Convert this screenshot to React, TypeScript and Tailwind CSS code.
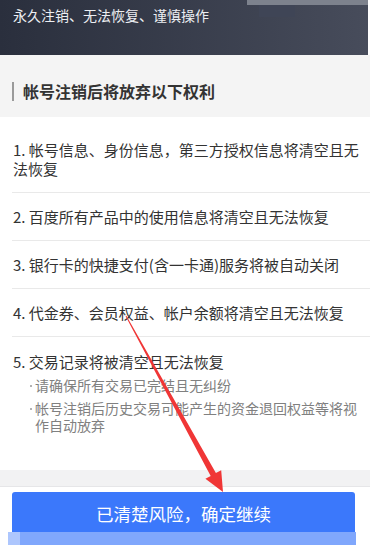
import React from 'react'

const items = [
  '1. 帐号信息、身份信息，第三方授权信息将清空且无法恢复',
  '2. 百度所有产品中的使用信息将清空且无法恢复',
  '3. 银行卡的快捷支付(含一卡通)服务将被自动关闭',
  '4. 代金券、会员权益、帐户余额将清空且无法恢复',
]

const subItems = ['请确保所有交易已完结且无纠纷', '帐号注销后历史交易可能产生的资金退回权益等将视作自动放弃']

export default function App() {
  return (
    <div
      className="relative w-[370px] h-[558px] overflow-hidden bg-white text-[#333]"
      style={{ fontFamily: '"Noto Sans CJK SC", "Noto Sans", sans-serif' }}
    >
      {/* header */}
      <div className="relative h-[55px] w-[368px] bg-gradient-to-r from-[#2a2f3d] to-[#474c5b]">
        <div className="absolute right-0 top-0 h-[5px] w-[121px] bg-[#7d828d]" />
        <div className="absolute right-[73px] top-[5px] h-[12px] w-[36px] bg-[#3f4556]" />
        <div className="pl-[13px] pt-[5px] text-[14px] leading-[20px] text-[#eceef2]">
          永久注销、无法恢复、谨慎操作
        </div>
      </div>

      {/* section title */}
      <div className="flex h-[62px] items-center bg-[#f4f4f4] pl-3 pt-[10px]">
        <span className="h-[19px] w-[2px] bg-[#9a9a9a]" />
        <span className="ml-[9px] text-[16px] font-semibold leading-[20px] text-[#333]">
          帐号注销后将放弃以下权利
        </span>
      </div>

      {/* list */}
      <div className="h-[353px] bg-white pt-[9px]">
        {items.map(item => (
          <div key={item} className="ml-3 border-b border-[#e9e9e9] py-[14px] pl-px pr-2 text-[15px] leading-[19px]">
            {item}
          </div>
        ))}
        <div className="ml-3 pl-px pr-2 pt-[15px]">
          <div className="text-[15px] leading-[19px]">5. 交易记录将被清空且无法恢复</div>
          {subItems.map(s => (
            <div key={s} className="relative mt-[6px] pl-[22px] pr-1 text-[14px] leading-[17px] text-[#808080]">
              <span className="absolute left-[17px] top-[8px] h-[2px] w-[2px] rounded-full bg-[#999]" />
              {s}
            </div>
          ))}
        </div>
      </div>

      <div className="h-[17px] border-b border-[#e6e6e8] bg-[#f2f2f3]" />

      {/* bottom button */}
      <div className="pt-[5px]">
        <button className="ml-3 flex h-[40px] w-[343px] items-center justify-center rounded-t-[3px] bg-[#3b78fb] pt-1 text-[17.5px] leading-[22px] text-white">
          已清楚风险，确定继续
        </button>
        <div className="flex h-[13px]">
          <div className="ml-2 w-[12px] bg-[#adc6fd]" />
          <div className="w-[336px] bg-[#80a7fc]" />
        </div>
      </div>

      {/* red arrow annotation */}
      <svg className="pointer-events-none absolute left-0 top-0" width="370" height="558" viewBox="0 0 370 558">
        <polygon
          points="126.4,315.8 215.9,473.1 221.2,470.2 223,492 205.4,478.8 210.7,476 125.6,316.2"
          fill="#f03636"
        />
      </svg>
    </div>
  )
}
